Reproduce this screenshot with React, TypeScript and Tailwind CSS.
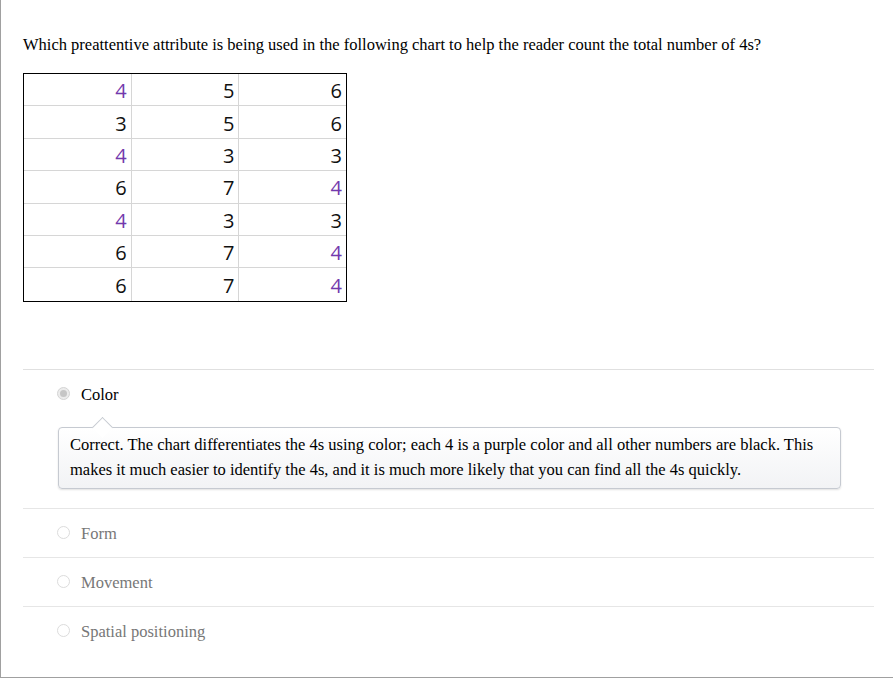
import React from 'react';

const rows: number[][] = [
  [4, 5, 6],
  [3, 5, 6],
  [4, 3, 3],
  [6, 7, 4],
  [4, 3, 3],
  [6, 7, 4],
  [6, 7, 4],
];

function Radio({ checked }: { checked?: boolean }) {
  if (checked) {
    return (
      <span className="w-[13px] h-[13px] rounded-full border border-[#d4d4d4] bg-[#ececec] flex items-center justify-center shrink-0">
        <span className="w-[7px] h-[7px] rounded-full bg-[#c6c6c6]" />
      </span>
    );
  }
  return <span className="w-[13px] h-[13px] rounded-full border border-[#dcdcdc] bg-white shrink-0" />;
}

function Option({ label, checked }: { label: string; checked?: boolean }) {
  return (
    <div className="h-[48px] flex items-center pl-[34px] gap-[11px]">
      <Radio checked={checked} />
      <span className={`pt-[4px] ${checked ? 'text-black' : 'text-[#777777]'}`}>{label}</span>
    </div>
  );
}

export default function App() {
  return (
    <div className="w-[893px] h-[678px] border-l border-b border-[#a0a0a0] bg-white overflow-hidden [font-family:'Liberation_Serif',serif] text-[16.5px] text-black">
      <div className="pl-[22px] w-[873px]">
        <p className="pt-[35px] leading-[20px]">
          Which preattentive attribute is being used in the following chart to help the reader count the total number of 4s?
        </p>

        <div className="mt-[18px] w-[324px] border border-black [font-family:'Open_Sans',sans-serif] text-[20px]">
          {rows.map((r, i) => (
            <div key={i} className={`flex h-[32.4px] ${i < rows.length - 1 ? 'border-b border-[#d6d6d6]' : ''}`}>
              {r.map((n, j) => (
                <div
                  key={j}
                  className={`flex-1 flex items-center justify-end pr-[4px] pt-[3px] leading-[28px] ${
                    j < 2 ? 'border-r border-[#d6d6d6]' : ''
                  } ${n === 4 ? 'text-[#7339ad]' : 'text-[#111111]'}`}
                >
                  {n}
                </div>
              ))}
            </div>
          ))}
        </div>

        <div className="mt-[67px] border-t border-[#e0e0e0]">
          <Option label="Color" checked />
          <div className="relative ml-[35px] mt-[9px] mb-[19px] w-[783px] rounded-[4px] border border-[#c6cad1] bg-gradient-to-b from-white to-[#f2f3f5] shadow-[0_1px_2px_rgba(0,0,0,0.12)] pl-[11px] pr-[10px] pt-[4px] pb-[6px] leading-[25px]">
            <span className="absolute top-[-8px] left-[36px] w-[15px] h-[15px] rotate-45 border-l border-t border-[#c6cad1] bg-white" />
            <span className="relative">
              Correct. The chart differentiates the 4s using color; each 4 is a purple color and all other numbers are black. This makes it much easier to identify the 4s, and it is much more likely that you can find all the 4s quickly.
            </span>
          </div>
        </div>
        <div className="border-t border-[#e6e6e6]">
          <Option label="Form" />
        </div>
        <div className="border-t border-[#e6e6e6]">
          <Option label="Movement" />
        </div>
        <div className="border-t border-[#e6e6e6]">
          <Option label="Spatial positioning" />
        </div>
      </div>
    </div>
  );
}
